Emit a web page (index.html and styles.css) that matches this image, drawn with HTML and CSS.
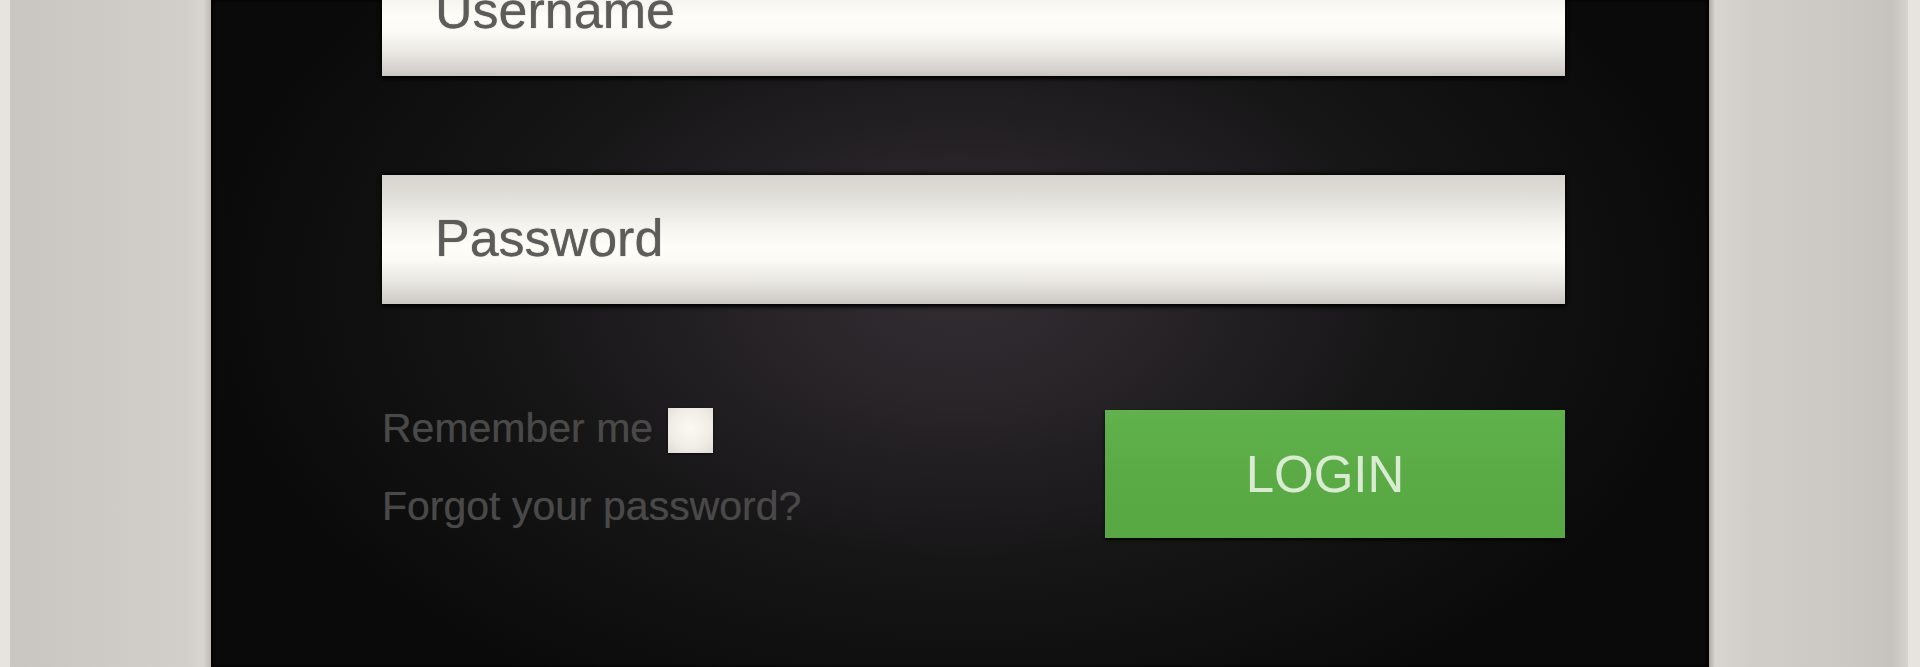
FILE: index.html
```html
<!DOCTYPE html>
<html lang="en">
<head>
<meta charset="utf-8">
<title>Login</title>
<link rel="stylesheet" href="styles.css">
</head>
<body>
<div class="page">
  <div class="edge edge-left"></div>
  <div class="side side-left"></div>
  <main class="panel">
    <form class="form">
      <div class="field">Username</div>
      <div class="field field-password">Password</div>
      <div class="options">
        <div class="links">
          <label class="remember"><span class="remember-text">Remember me</span><span class="checkbox"></span></label>
          <div class="forgot">Forgot your password?</div>
        </div>
        <div class="login">LOGIN</div>
      </div>
    </form>
  </main>
  <div class="side side-right"></div>
  <div class="edge edge-right"></div>
</div>
</body>
</html>
```
FILE: styles.css
```css
html, body {
  margin: 0;
  padding: 0;
  width: 1920px;
  height: 667px;
  overflow: hidden;
  background: #0a0a0a;
  font-family: "Liberation Sans", Arial, sans-serif;
}

.page {
  display: flex;
  width: 1920px;
  height: 667px;
}

.edge {
  flex: none;
  background: #e7e4df;
}
.edge-left { width: 10px; }
.edge-right { width: 12px; }

.side {
  flex: none;
}
.side-left {
  width: 201px;
  background: linear-gradient(to right, #c9c6c2 0%, #cdcac6 40%, #d2cfcb 88%, #d9d6d1 96%, #bdbab6 100%);
}
.side-right {
  width: 199px;
  background: linear-gradient(to right, #aaa7a3 0%, #d8d6d1 3%, #d1cec9 20%, #cbc8c4 70%, #c6c2be 92%, #d6d3cf 100%);
}

.panel {
  flex: none;
  width: 1498px;
  height: 667px;
  background:
    radial-gradient(ellipse 760px 470px at 750px 290px, #332d32 0%, #282428 25%, #171617 58%, #0a0a0a 100%),
    #0a0a0a;
  box-shadow: inset 3px 0 3px rgba(0,0,0,.6), inset -3px 0 3px rgba(0,0,0,.6);
}

.form {
  display: flex;
  flex-direction: column;
  margin: -53px 144px 0 171px;
}

.field {
  height: 129px;
  line-height: 127px;
  padding-left: 53px;
  font-size: 52px;
  color: #5d5c5a;
  text-shadow: 0 0 1px rgba(80,80,80,.8);
  background: linear-gradient(to bottom, #d6d3cd 0%, #e2e0da 18%, #f4f2ec 38%, #fefdf7 55%, #fbfaf4 66%, #e9e7e2 82%, #d3d0cb 96%, #c9c6c1 100%);
  box-shadow: 0 3px 4px rgba(0,0,0,.95), 0 -2px 4px rgba(0,0,0,.7);
}

.field-password {
  margin-top: 99px;
}

.options {
  display: flex;
  justify-content: space-between;
  align-items: flex-start;
  margin-top: 104px;
}

.links {
  display: flex;
  flex-direction: column;
}

.remember {
  display: flex;
  align-items: flex-start;
}

.remember-text,
.forgot {
  font-size: 41px;
  line-height: 1;
  color: #4a4949;
  text-shadow: 0 0 1px rgba(70,70,70,.7);
}

.checkbox {
  width: 45px;
  height: 45px;
  margin-left: 15px;
  background: radial-gradient(circle at 50% 45%, #fbf9f2 0%, #efede6 60%, #dedbd5 100%);
  box-shadow: 0 1px 2px rgba(0,0,0,.6);
}

.forgot {
  margin-top: 33px;
}

.login {
  width: 460px;
  height: 128px;
  margin-top: 2px;
  box-sizing: border-box;
  padding-right: 20px;
  display: flex;
  align-items: center;
  justify-content: center;
  font-size: 51px;
  color: #d9ecd2;
  background: linear-gradient(to bottom, #60b24b 0%, #5aab46 50%, #57a743 100%);
  box-shadow: 0 2px 3px rgba(0,0,0,.8);
}
```
